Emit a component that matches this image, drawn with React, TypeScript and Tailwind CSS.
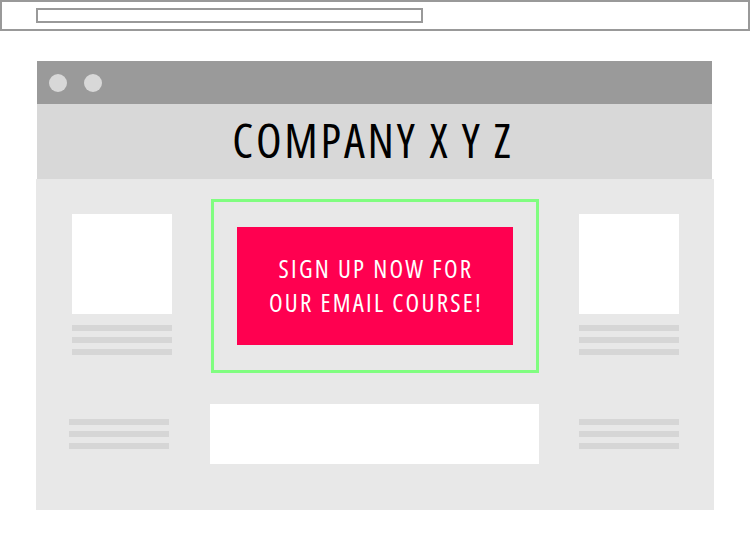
export default function App() {
  const Lines = ({ className = "" }: { className?: string }) => (
    <div className={`flex flex-col gap-[6px] ${className}`}>
      <div className="h-[6px] w-[100px] bg-[#d6d6d6]" />
      <div className="h-[6px] w-[100px] bg-[#d6d6d6]" />
      <div className="h-[6px] w-[100px] bg-[#d6d6d6]" />
    </div>
  );
  return (
    <div className="w-[750px] h-[550px] bg-white overflow-hidden" style={{ fontFamily: '"Open Sans", "Liberation Sans", sans-serif' }}>
      <div className="h-[31px] border-2 border-[#999999] pt-[6px] pl-[34px]">
        <div className="w-[387px] h-[15px] border-2 border-[#999999]" />
      </div>
      <div className="mt-[30px] ml-[36px] w-[678px]">
        <div className="ml-[1px] mr-[2px] h-[43px] bg-[#9a9a9a] flex items-center gap-[17px] pl-[12px]">
          <div className="w-[18px] h-[18px] rounded-full bg-[#d8d8d8]" />
          <div className="w-[18px] h-[18px] rounded-full bg-[#d8d8d8]" />
        </div>
        <div className="ml-[1px] mr-[2px] h-[75px] bg-[#d8d8d8] flex items-center justify-center">
          <h1 className="text-[47px] leading-none text-black font-stretch-condensed pl-[8px] -mt-[2px]">
            <span className="tracking-[0.06em]">COMPANY </span>
            <span className="tracking-[0.3em]">XYZ</span>
          </h1>
        </div>
        <div className="h-[331px] bg-[#e8e8e8] flex">
          <div className="ml-[36px] w-[100px] flex flex-col">
            <div className="mt-[35px] h-[100px] bg-white" />
            <Lines className="mt-[11px]" />
            <Lines className="mt-[64px] -ml-[3px]" />
          </div>
          <div className="ml-[39px] w-[328px] flex flex-col">
            <div className="mt-[20px] h-[174px] border-[3px] border-[#80fd80] flex items-center justify-center">
              <div className="w-[276px] h-[118px] bg-[#ff0050] flex items-center justify-center">
                <p className="text-white text-center text-[25px] leading-[34px] tracking-[0.09em] font-normal font-stretch-condensed pl-[2px] -mt-[2px]">
                  SIGN UP NOW FOR
                  <br />
                  OUR EMAIL COURSE!
                </p>
              </div>
            </div>
            <div className="mt-[31px] -ml-[1px] w-[329px] h-[60px] bg-white" />
          </div>
          <div className="ml-[40px] w-[100px] flex flex-col">
            <div className="mt-[35px] h-[100px] bg-white" />
            <Lines className="mt-[11px]" />
            <Lines className="mt-[64px]" />
          </div>
        </div>
      </div>
    </div>
  );
}
